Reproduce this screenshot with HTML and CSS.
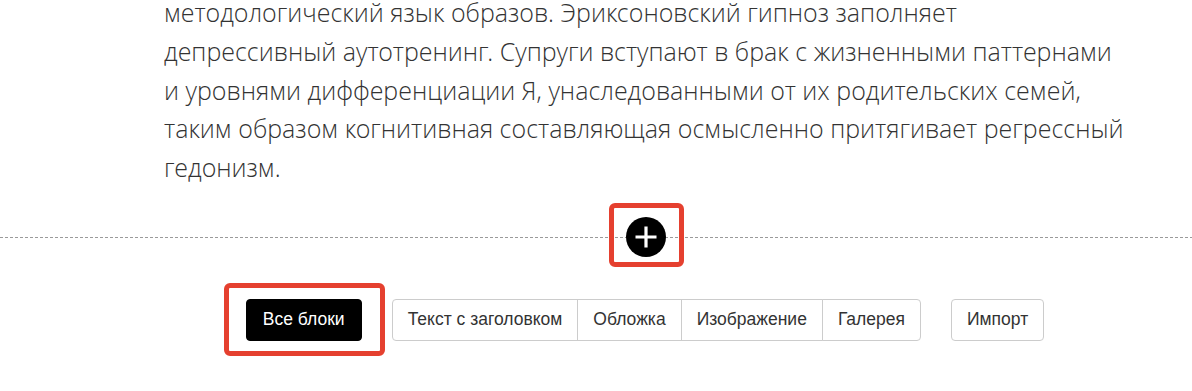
FILE: index.html
```html
<!DOCTYPE html>
<html lang="ru">
<head>
<meta charset="utf-8">
<title>Редактор</title>
<link rel="stylesheet" href="styles.css">
</head>
<body>
<main class="page">
  <section class="content">
    <p class="text">методологический язык образов. Эриксоновский гипноз заполняет<br>депрессивный аутотренинг. Супруги вступают в брак с жизненными паттернами<br>и уровнями дифференциации Я, унаследованными от их родительских семей,<br>таким образом когнитивная составляющая осмысленно притягивает регрессный<br>гедонизм.</p>
  </section>
  <div class="divider">
    <div class="divider-inner">
      <button class="add highlight-add" type="button" aria-label="Добавить блок">
        <svg width="40" height="40" viewBox="0 0 40 40" aria-hidden="true">
          <circle cx="20" cy="20" r="20" fill="#000"/>
          <path d="M20 9.5V30.5M9.5 20H30.5" stroke="#fff" stroke-width="3.2" fill="none"/>
        </svg>
      </button>
    </div>
  </div>
  <nav class="toolbar">
    <button class="btn btn-dark highlight-btn" type="button">Все блоки</button>
    <div class="btn-group">
      <button class="btn seg" type="button">Текст с заголовком</button>
      <button class="btn seg" type="button">Обложка</button>
      <button class="btn seg" type="button">Изображение</button>
      <button class="btn seg" type="button">Галерея</button>
    </div>
    <button class="btn btn-light" type="button">Импорт</button>
  </nav>
</main>
</body>
</html>
```
FILE: styles.css
```css
* { box-sizing: border-box; }
html, body { margin: 0; padding: 0; background: #fff; }
body { width: 1192px; height: 391px; overflow: hidden; }

.page { display: flex; flex-direction: column; }

.content { padding-left: 98px; }
.text {
  width: 962px;
  margin: -7px auto 0;
  font-family: "Open Sans Light", "Open Sans", "DejaVu Sans", sans-serif;
  font-weight: 300;
  font-size: 25px;
  line-height: 38.75px;
  color: #333;
  white-space: nowrap;
}

.divider {
  margin-top: 50px;
  height: 1px;
  background: repeating-linear-gradient(to right, #9a9a9a 0 3px, transparent 3px 5px);
}
.divider-inner {
  display: flex;
  justify-content: center;
  padding-left: 100px;
  height: 1px;
  align-items: center;
}
.add {
  position: relative;
  width: 40px;
  height: 40px;
  padding: 0;
  border: 0;
  background: transparent;
  display: block;
  flex: none;
  cursor: pointer;
}
.add svg { display: block; }

.highlight-add::after,
.highlight-btn::after {
  content: "";
  position: absolute;
  border: 5px solid #e5402f;
  border-radius: 6px;
  pointer-events: none;
}
.highlight-add::after { left: -17px; top: -14px; right: -18px; bottom: -10px; }

.toolbar {
  display: flex;
  align-items: center;
  justify-content: center;
  gap: 30px;
  padding-left: 98px;
  margin-top: 61px;
}
.btn {
  font-family: "Liberation Sans", Arial, sans-serif;
  font-size: 17.5px;
  height: 42px;
  padding: 0 15px;
  background: #fff;
  color: #333;
  border: 1px solid #ccc;
  border-radius: 4px;
  cursor: pointer;
  white-space: nowrap;
}
.btn-dark {
  position: relative;
  background: #000;
  border-color: #000;
  color: #fff;
  padding: 0 16px;
}
.highlight-btn::after { left: -23px; top: -17px; right: -24px; bottom: -16px; }

.btn-group { display: flex; }
.seg { border-radius: 0; margin-left: -1px; }
.seg:first-child { margin-left: 0; border-radius: 4px 0 0 4px; }
.seg:last-child { border-radius: 0 4px 4px 0; }
.btn-light { padding: 0 15px; }
```
